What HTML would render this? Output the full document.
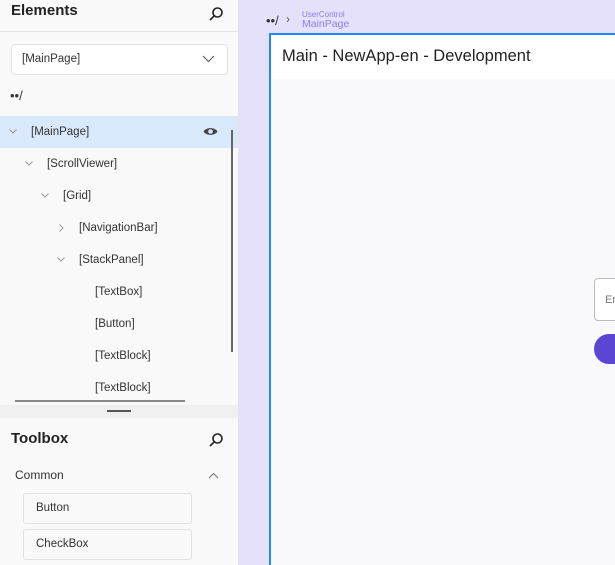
<!DOCTYPE html>
<html style="overflow:hidden"><head><style>
*{margin:0;padding:0;box-sizing:border-box}
html,body{width:615px;height:565px;overflow:hidden}
body{font-family:"Liberation Sans",sans-serif;background:#e6e1fb;position:relative;font-size:12px;color:#333}
.side{position:absolute;left:0;top:0;width:239px;height:565px;background:#f9f9f9;border-right:1px solid #e4e4e4}
.abs{position:absolute}
.row{position:absolute;left:0;width:238px;height:32px;line-height:32px;font-size:11.5px;color:#333}
.chev{position:absolute;top:13px}
</style></head><body>
<div class="side">
  <div class="abs" style="left:11px;top:2px;font-size:15px;font-weight:bold;color:#222">Elements</div>
  <svg class="abs" style="left:208px;top:6px" width="16" height="16" viewBox="0 0 16 16"><circle cx="9.5" cy="6.5" r="4.5" fill="none" stroke="#222" stroke-width="1.6"/><line x1="6.3" y1="9.8" x2="2" y2="14" stroke="#222" stroke-width="1.6"/></svg>
  <div class="abs" style="left:0;top:31px;width:238px;height:1px;background:#e4e4e4"></div>
  <div class="abs" style="left:11px;top:44px;width:217px;height:31px;background:#fff;border:1px solid #e2e2e2;border-radius:4px;font-size:11.5px;line-height:29px;padding-left:10px">[MainPage]</div>
  <svg class="abs" style="left:202px;top:55px" width="13" height="8" viewBox="0 0 13 8"><path d="M1 1l5.5 5.5L12 1" fill="none" stroke="#666" stroke-width="1.2"/></svg>
  <div class="abs" style="left:10px;top:88px;font-size:13px">••/</div>
  <div class="row" style="top:116px;background:#d9e8fb"><svg class="chev" style="left:9px" width="8" height="5" viewBox="0 0 8 5"><path d="M0.5 0.5L4 4L7.5 0.5" fill="none" stroke="#999"/></svg><span class="abs" style="left:31px">[MainPage]</span>
    <svg class="abs" style="left:203px;top:10px" width="15" height="11" viewBox="0 0 15 11"><path d="M0.5 5.5C3 1 12 1 14.5 5.5C12 10 3 10 0.5 5.5Z" fill="#444"/><circle cx="7.5" cy="5.5" r="2.3" fill="#d9e8fb"/></svg></div>
  <div class="row" style="top:148px"><svg class="chev" style="left:25px" width="8" height="5" viewBox="0 0 8 5"><path d="M0.5 0.5L4 4L7.5 0.5" fill="none" stroke="#999"/></svg><span class="abs" style="left:47px">[ScrollViewer]</span></div>
  <div class="row" style="top:180px"><svg class="chev" style="left:41px" width="8" height="5" viewBox="0 0 8 5"><path d="M0.5 0.5L4 4L7.5 0.5" fill="none" stroke="#999"/></svg><span class="abs" style="left:63px">[Grid]</span></div>
  <div class="row" style="top:212px"><svg class="chev" style="left:59px;top:12px" width="5" height="8" viewBox="0 0 5 8"><path d="M0.5 0.5L4 4L0.5 7.5" fill="none" stroke="#999"/></svg><span class="abs" style="left:79px">[NavigationBar]</span></div>
  <div class="row" style="top:244px"><svg class="chev" style="left:57px" width="8" height="5" viewBox="0 0 8 5"><path d="M0.5 0.5L4 4L7.5 0.5" fill="none" stroke="#999"/></svg><span class="abs" style="left:79px">[StackPanel]</span></div>
  <div class="row" style="top:276px"><span class="abs" style="left:95px">[TextBox]</span></div>
  <div class="row" style="top:308px"><span class="abs" style="left:95px">[Button]</span></div>
  <div class="row" style="top:340px"><span class="abs" style="left:95px">[TextBlock]</span></div>
  <div class="row" style="top:372px"><span class="abs" style="left:95px">[TextBlock]</span></div>
  <div class="abs" style="left:231px;top:130px;width:2px;height:222px;background:#666"></div>
  <div class="abs" style="left:15px;top:400px;width:170px;height:2px;background:#888"></div>
  <div class="abs" style="left:0;top:405px;width:238px;height:13px;background:#f0f0f0"></div>
  <div class="abs" style="left:107px;top:410px;width:24px;height:2px;background:#555"></div>
  <div class="abs" style="left:11px;top:430px;font-size:15px;font-weight:bold;color:#222">Toolbox</div>
  <svg class="abs" style="left:208px;top:432px" width="16" height="16" viewBox="0 0 16 16"><circle cx="9.5" cy="6.5" r="4.5" fill="none" stroke="#222" stroke-width="1.6"/><line x1="6.3" y1="9.8" x2="2" y2="14" stroke="#222" stroke-width="1.6"/></svg>
  <div class="abs" style="left:15px;top:468px;font-size:12px">Common</div>
  <svg class="abs" style="left:208px;top:472px" width="11" height="7" viewBox="0 0 11 7"><path d="M1 6l4.5-4.5L10 6" fill="none" stroke="#777" stroke-width="1"/></svg>
  <div class="abs" style="left:23px;top:493px;width:169px;height:31px;background:#f9f9f9;border:1px solid #e0e0e0;border-radius:3px;line-height:29px;padding-left:12px;font-size:11.5px">Button</div>
  <div class="abs" style="left:23px;top:529px;width:169px;height:31px;background:#f9f9f9;border:1px solid #e0e0e0;border-radius:3px;line-height:29px;padding-left:12px;font-size:11.5px">CheckBox</div>
</div>
<div class="abs" style="left:266px;top:13px;font-size:13px;color:#333">••/</div>
<div class="abs" style="left:286px;top:12px;font-size:12px;color:#555">›</div>
<div class="abs" style="left:302px;top:10px;font-size:8px;color:#8a80e8;line-height:9px">UserControl</div>
<div class="abs" style="left:302px;top:18px;font-size:10.5px;color:#8a80e8;line-height:12px">MainPage</div>
<div class="abs" style="left:269px;top:33px;width:350px;height:532px;border:2px solid #1e88ff;border-bottom:none;background:#f9f9fc;overflow:hidden">
  <div style="height:44px;background:#fff;font-size:16.5px;color:#222;padding:12px 0 0 11px">Main - NewApp-en - Development</div>
  <div class="abs" style="left:323px;top:243px;width:40px;height:43px;border:1px solid #bbb;border-radius:4px;background:#fff;font-size:11px;color:#777;padding:15px 0 0 10px">En</div>
  <div class="abs" style="left:323px;top:299px;width:40px;height:30px;border-radius:15px;background:#5b45d3"></div>
</div>
</body></html>
